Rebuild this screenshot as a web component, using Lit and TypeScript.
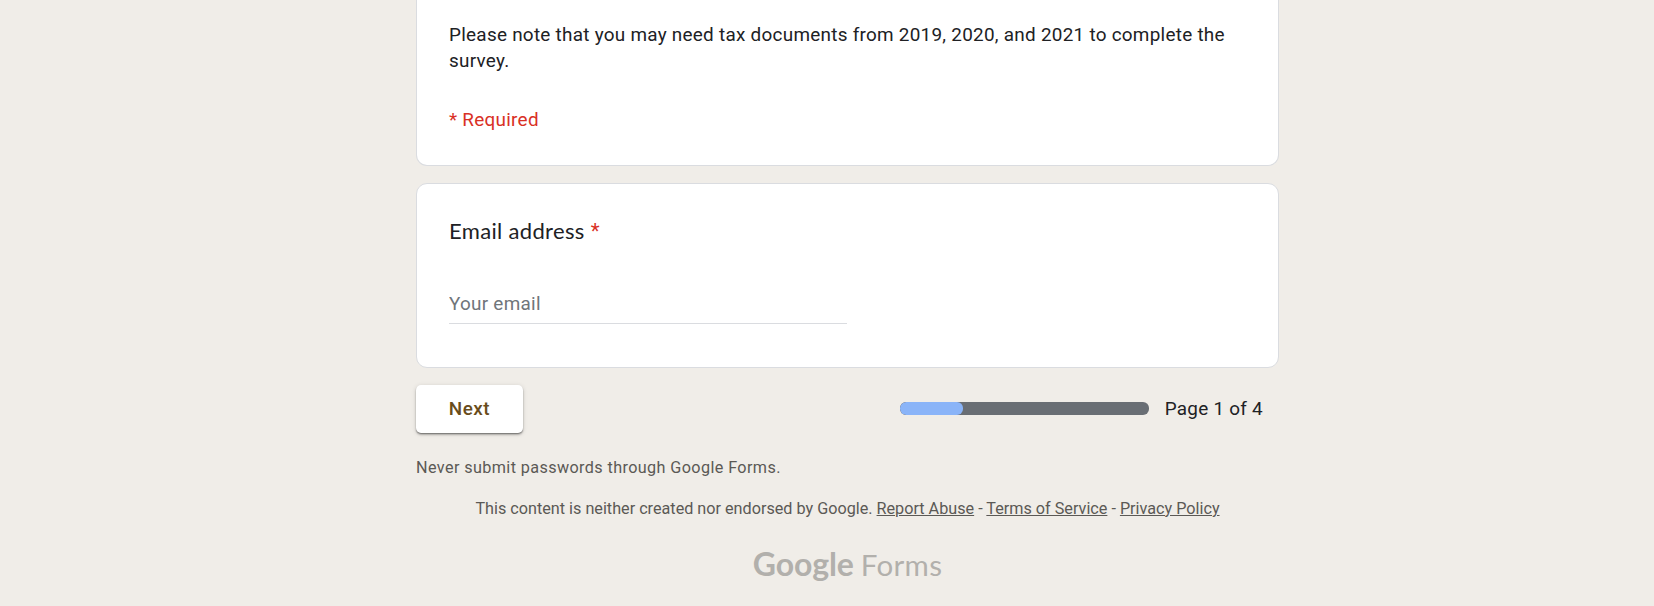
import { LitElement, html, css } from "lit";
import { customElement, property } from "lit/decorators.js";

@customElement("page-progress")
class PageProgress extends LitElement {
  @property({ type: Number }) page = 1;
  @property({ type: Number }) total = 4;

  static styles = css`
    :host { display: flex; align-items: center; gap: 16px; }
    .track { width: 249px; height: 13px; border-radius: 6px; background: #696e74; overflow: hidden; }
    .fill { height: 100%; border-radius: 6px; background: #8ab4f8; }
    .label { font-size: 18.9px; line-height: 27px; letter-spacing: 0.27px; color: #202124; white-space: nowrap; }
  `;

  render() {
    return html`
      <div class="track"><div class="fill" style="width:${(this.page / this.total) * 100 + 0.3}%"></div></div>
      <div class="label">Page ${this.page} of ${this.total}</div>
    `;
  }
}

@customElement("app-root")
class AppRoot extends LitElement {
  static styles = css`
    :host {
      display: block;
      height: 606px;
      overflow: hidden;
      background: #f0ede8;
      font-family: Roboto, "Liberation Sans", sans-serif;
      color: #202124;
    }
    .form { width: 863px; margin-left: 416px; display: flex; flex-direction: column; }
    .card { box-sizing: border-box; background: #fff; border: 1px solid #dadce0; border-radius: 11px; padding: 0 32px; }
    .intro { height: 166px; border-top: 0; border-radius: 0 0 11px 11px; padding-top: 22px; }
    .text { margin: 0; font-size: 18.9px; line-height: 26px; letter-spacing: 0.27px; }
    .required { margin: 32px 0 0; font-size: 18.9px; line-height: 27px; letter-spacing: 0.27px; color: #d93025; }
    .question { height: 185px; margin-top: 17px; padding-top: 31px; }
    .title { font-family: Lato, Roboto, sans-serif; font-size: 22px; line-height: 32px; letter-spacing: 0.33px; display: flex; gap: 6px; }
    .star { font-family: Roboto, sans-serif; font-size: 20.5px; color: #d93025; }
    .input {
      display: block; box-sizing: border-box; width: 398px; height: 40px; margin-top: 37px; padding: 0 0 1px;
      border: 0; border-bottom: 1px solid #dadce0; outline: 0; background: none;
      font: 18.9px Roboto, sans-serif; letter-spacing: 0.27px; color: #202124;
    }
    .input::placeholder { color: #70757a; opacity: 1; }
    .actions { height: 48px; margin-top: 17px; padding-right: 16px; display: flex; justify-content: space-between; align-items: center; }
    page-progress { margin-bottom: 2px; }
    .next {
      width: 107px; height: 48px; padding: 0 0 2px; border: 0; border-radius: 5px; background: #fff; color: #694c1b;
      font: 500 18.9px Roboto, sans-serif; letter-spacing: 0.5px;
      box-shadow: 0 1px 1px rgba(0,0,0,.3), 0 2px 2px rgba(0,0,0,.2), 0 1px 5px rgba(0,0,0,.14);
    }
    .warning { margin: 24px 0 0; font-size: 16.2px; line-height: 22px; letter-spacing: 0.39px; color: #5b5955; }
    .legal { margin: 19px 0 0; text-align: center; font-size: 16.2px; line-height: 22px; color: #5b5955; }
    .link { color: inherit; text-decoration: underline; }
    .logo { margin-top: 24px; display: flex; justify-content: center; align-items: baseline; gap: 7px; color: #b2b0ac; font-family: Lato, sans-serif; font-size: 32px; line-height: 40px; }
    .google { font-weight: 700; letter-spacing: -0.1px; }
    .forms { font-weight: 400; font-size: 29.5px; letter-spacing: 0.3px; }
  `;

  render() {
    return html`
      <main class="form">
        <section class="card intro">
          <p class="text">Please note that you may need tax documents from 2019, 2020, and 2021 to complete the survey.</p>
          <p class="required">* Required</p>
        </section>
        <section class="card question">
          <div class="title"><span>Email address</span><span class="star">*</span></div>
          <input class="input" type="email" placeholder="Your email" />
        </section>
        <div class="actions">
          <button class="next">Next</button>
          <page-progress .page=${1} .total=${4}></page-progress>
        </div>
        <p class="warning">Never submit passwords through Google Forms.</p>
        <p class="legal">This content is neither created nor endorsed by Google. <a class="link" href="#">Report Abuse</a> - <a class="link" href="#">Terms of Service</a> - <a class="link" href="#">Privacy Policy</a></p>
        <div class="logo"><span class="google">Google</span><span class="forms">Forms</span></div>
      </main>
    `;
  }
}
